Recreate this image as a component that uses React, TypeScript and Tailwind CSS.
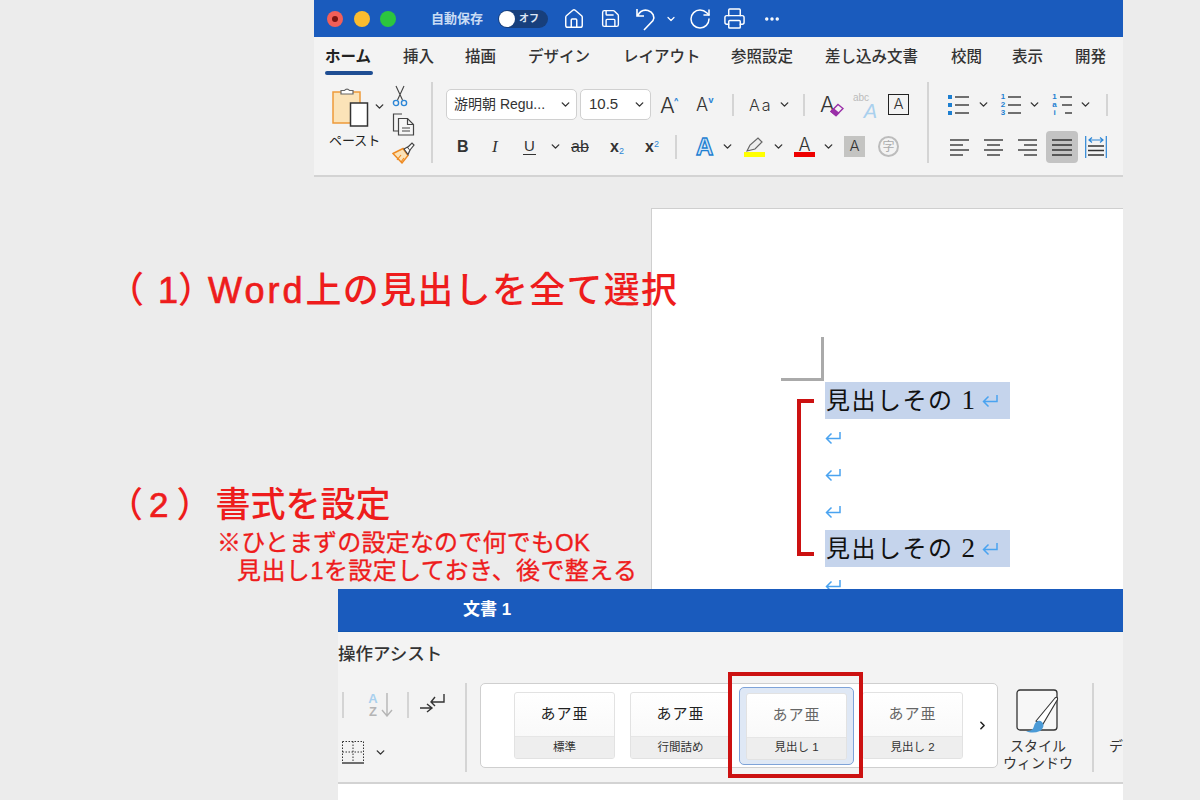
import { ChevronDown, ChevronRight, House, Save, RotateCw, Printer, Ellipsis } from "lucide-react"

const sans = "font-['Liberation_Sans','Noto_Sans_CJK_JP',sans-serif]"

function Chev({ className = "" }: { className?: string }) {
  return <ChevronDown size={13} strokeWidth={2.6} className={`shrink-0 text-[#333] ${className}`} />
}

function Sep({ className = "" }: { className?: string }) {
  return <div className={`w-[2px] shrink-0 bg-[#d4d4d4] ${className}`} />
}

function ReturnMark({ className = "" }: { className?: string }) {
  return (
    <svg width="16" height="14" viewBox="0 0 16 14" fill="none" stroke="#4aa3f0" strokeWidth="1.5" className={className}>
      <path d="M15 1v6.500H1.500M6.500 2.500 1.500 7.500l5 5" />
    </svg>
  )
}

function ClipboardIcon() {
  return (
    <svg width="38" height="42" viewBox="0 0 38 42" fill="none">
      <rect x="1" y="6" width="27" height="31" fill="#fbe3b8" stroke="#ee9a3a" strokeWidth="1.5" />
      <path d="M9 8V4.500h3.500a3 3 0 0 1 5 0H21V8Z" fill="#fff" stroke="#666" strokeWidth="1.2" />
      <rect x="18.500" y="17" width="17" height="23" fill="#fff" stroke="#333" strokeWidth="1.5" />
    </svg>
  )
}

function ScissorsIcon() {
  return (
    <svg width="16" height="22" viewBox="0 0 16 22" fill="none">
      <path d="M4 1 10.500 15M12 1 5.500 15" stroke="#444" strokeWidth="1.1" />
      <circle cx="4" cy="18" r="2.600" stroke="#2c86d6" strokeWidth="1.4" />
      <circle cx="12" cy="18" r="2.600" stroke="#2c86d6" strokeWidth="1.4" />
    </svg>
  )
}

function CopyIcon() {
  return (
    <svg width="23" height="23" viewBox="0 0 23 23" fill="none" stroke="#444" strokeWidth="1.2">
      <path d="M10 1H1.500v17H6" />
      <path d="M6.500 5.500h9l6 6v10.500h-15Z" fill="#f5f5f5" />
      <path d="M15.500 5.500v6h6M10 15h8M10 18h8" />
    </svg>
  )
}

function BrushIcon() {
  return (
    <svg width="23" height="22" viewBox="0 0 23 22" fill="none">
      <path d="M1 11.500 11 6.500l5 7L10 21Z" fill="#fbe3b8" stroke="#ee8a22" strokeWidth="1.4" />
      <path d="M5 18l4-5M9 20l3-4" stroke="#ee8a22" strokeWidth="1.2" />
      <path d="m12 7 3.500-2 2.500 3-2 4.500Z" fill="#fff" stroke="#444" strokeWidth="1.2" />
      <path d="m16 5 4-4 2 2-4 5" fill="#fff" stroke="#444" strokeWidth="1.2" />
    </svg>
  )
}

function Eraser() {
  return (
    <svg width="14" height="14" viewBox="0 0 14 14" fill="none" stroke="#9a2fa8" strokeWidth="1.4" className="absolute -right-[4px] bottom-0">
      <path d="m1 8.500 7-7 5 4-7 7Z" fill="#f3f3f3" />
      <path d="m1 8.500 5 4 2.500-2.500-5-4Z" fill="#9a2fa8" />
    </svg>
  )
}

function BulletList() {
  return (
    <svg width="22" height="22" viewBox="0 0 22 22" fill="none" className="shrink-0">
      <path d="M0 1h4v4H0ZM0 9h4v4H0ZM0 17h4v4H0Z" fill="#1d7fd1" />
      <path d="M7 3h14M7 11h14M7 19h14" stroke="#444" strokeWidth="1.4" />
    </svg>
  )
}

function NumberList() {
  return (
    <div className="flex w-[21px] shrink-0 items-center gap-[2px]">
      <div className="flex w-[6px] flex-col text-center text-[8px] font-bold leading-[8px] text-[#1d7fd1]">
        <span>1</span>
        <span>2</span>
        <span>3</span>
      </div>
      <svg width="13" height="22" viewBox="0 0 13 22" fill="none" stroke="#444" strokeWidth="1.4">
        <path d="M0 3h13M0 11h13M0 19h13" />
      </svg>
    </div>
  )
}

function MultiList() {
  return (
    <div className="flex w-[21px] shrink-0 items-center gap-[2px]">
      <div className="flex w-[7px] flex-col text-center text-[8px] font-bold leading-[8px] text-[#1d7fd1]">
        <span>1</span>
        <span>a</span>
        <span>i</span>
      </div>
      <svg width="12" height="22" viewBox="0 0 12 22" fill="none" stroke="#444" strokeWidth="1.4">
        <path d="M0 3h12M2 11h10M5 19h7" />
      </svg>
    </div>
  )
}

function Align({ kind }: { kind: "left" | "center" | "right" }) {
  const d = {
    left: "M0 1h19M0 6h13M0 11h19M0 16h13",
    center: "M0 1h19M3 6h13M0 11h19M3 16h13",
    right: "M0 1h19M6 6h13M0 11h19M6 16h13",
  }[kind]
  return (
    <svg width="19" height="17" viewBox="0 0 19 17" fill="none" stroke="#444" strokeWidth="1.3" className="shrink-0">
      <path d={d} />
    </svg>
  )
}

function TopWindow() {
  const tabs = [
    ["ホーム", "w-[47px] font-bold text-[#222]"],
    ["挿入", "ml-[31px] w-[32px]"],
    ["描画", "ml-[30px] w-[32px]"],
    ["デザイン", "ml-[31px] w-[62px]"],
    ["レイアウト", "ml-[33px] w-[77px]"],
    ["参照設定", "ml-[31px] w-[64px]"],
    ["差し込み文書", "ml-[30px] w-[95px]"],
    ["校閲", "ml-[31px] w-[32px]"],
    ["表示", "ml-[29px] w-[32px]"],
    ["開発", "ml-[31px] w-[32px]"],
  ]
  return (
    <div className="absolute left-[314px] top-0 flex h-[177px] w-[809px] flex-col border-b-2 border-[#d3d3d3] bg-[#f3f3f3]">
      {/* title bar */}
      <div className="flex h-[37px] shrink-0 items-center bg-[#1a5bbd] pl-[13px] text-white">
        <span className="h-4 w-4 rounded-full bg-[#f25f58] p-[5px]">
          <span className="block h-[6px] w-[6px] rounded-full bg-[#7a1410]" />
        </span>
        <span className="ml-[11px] h-4 w-4 rounded-full bg-[#fbbc2f]" />
        <span className="ml-[10px] h-4 w-4 rounded-full bg-[#2cc63f]" />
        <span className="ml-[35px] w-[52px] text-[13px] font-bold text-[#c9dcf4]">自動保存</span>
        <div className="ml-[15px] flex h-[18px] w-[50px] items-center rounded-full bg-[#173f7c] pl-[1px]">
          <span className="h-4 w-4 rounded-full bg-white" />
          <span className="ml-[4px] text-[10px] font-bold leading-none text-[#dce6f4]">オフ</span>
        </div>
        <House size={22} strokeWidth={1.6} className="ml-[15px] shrink-0" />
        <Save size={21} strokeWidth={1.6} className="ml-[15px] shrink-0" />
        <svg width="20" height="24" viewBox="0 0 20 24" fill="none" stroke="currentColor" strokeWidth="1.6" className="ml-[15px] shrink-0">
          <path d="M1 2v7h7M1.500 9C4 4 8 2.500 12 3.500c5 1.500 7 6 5 10L8 23" />
        </svg>
        <ChevronDown size={12} strokeWidth={2.4} className="ml-[9px] shrink-0" />
        <RotateCw size={24} strokeWidth={1.5} className="ml-[11px] shrink-0" />
        <Printer size={23} strokeWidth={1.5} className="ml-[11px] shrink-0" />
        <Ellipsis size={18} strokeWidth={2.6} className="ml-[17px] shrink-0" />
      </div>
      {/* tabs */}
      <div className="flex h-[38px] shrink-0 items-center pl-[11px] pt-[2px] text-[15.500px] font-medium whitespace-nowrap text-[#333]">
        {tabs.map(([t, c]) => (
          <span key={t} className={`relative shrink-0 ${c}`}>
            {t}
            {t === "ホーム" && <span className="absolute -bottom-[6px] left-0 h-[4px] w-[48px] rounded-full bg-[#1f4e93]" />}
          </span>
        ))}
      </div>
      {/* ribbon */}
      <div className="flex flex-1 pl-[15px] pt-[7px]">
        <div className="flex w-[62px] shrink-0 flex-col">
          <div className="flex items-center pl-[3px] pt-[4px]">
            <ClipboardIcon />
            <Chev className="ml-[3px] mt-[-2px]" />
          </div>
          <span className="mt-[5px] text-[13px] leading-4 whitespace-nowrap text-[#222]">ペースト</span>
        </div>
        <div className="flex w-[40px] shrink-0 flex-col items-start gap-[6px] pl-[1px] pt-[3px]">
          <ScissorsIcon />
          <CopyIcon />
          <BrushIcon />
        </div>
        <Sep className="h-[81px]" />
        <div className="ml-[13px] flex w-[481px] shrink-0 flex-col pt-[4px]">
          <div className="flex h-[34px] items-center pt-[3px] text-[#333]">
            <div className="flex h-[31px] w-[131px] shrink-0 items-center justify-between rounded-[5px] border border-[#d0d0d0] bg-white pl-[7px] pr-[4px] text-[14px] whitespace-nowrap">
              游明朝 Regu...
              <Chev />
            </div>
            <div className="ml-[3px] flex h-[31px] w-[71px] shrink-0 items-center justify-between rounded-[5px] border border-[#d0d0d0] bg-white pl-[8px] pr-[4px] text-[15px]">
              10.5
              <Chev />
            </div>
            <span className="ml-[9px] w-[22px] shrink-0 font-['Inter'] text-[22px] font-light leading-none">
              A<span className="relative -top-[8px] -ml-[1px] text-[10px] font-bold text-[#2c86d6]">^</span>
            </span>
            <span className="ml-[14px] w-[22px] shrink-0 font-['Inter'] text-[18px] font-light leading-none">
              A<span className="relative -top-[8px] text-[9px] font-bold text-[#2c86d6]">v</span>
            </span>
            <Sep className="ml-[14px] h-[22px]" />
            <span className="ml-[15px] w-[24px] shrink-0 font-['Inter'] text-[16px] font-light tracking-[2px]">Aa</span>
            <Chev className="ml-[5px]" />
            <Sep className="ml-[12px] h-[22px]" />
            <span className="relative ml-[15px] h-[24px] w-[20px] shrink-0 font-['Inter'] text-[22px] font-light leading-[22px]">
              A
              <Eraser />
            </span>
            <span className="relative ml-[13px] h-[24px] w-[24px] shrink-0 text-[10px] leading-none text-[#bbb]">
              abc
              <span className="absolute -bottom-[4px] right-0 text-[20px] italic text-[#a9d0ee]">A</span>
            </span>
            <span className="ml-[11px] flex h-[21px] w-[21px] shrink-0 items-center justify-center border border-[#222] font-['Inter'] text-[15px] font-light">A</span>
          </div>
          <div className="mt-[10px] flex h-[32px] items-center pt-[1px] text-[#333]">
            <span className="ml-[11px] w-[11px] shrink-0 text-[16px] font-bold">B</span>
            <span className="ml-[24px] w-[8px] shrink-0 font-['Liberation_Serif'] text-[17px] italic">I</span>
            <span className="ml-[23px] w-[13px] shrink-0 border-b border-[#333] text-center text-[15px] leading-[16px]">U</span>
            <Chev className="ml-[13px]" />
            <span className="ml-[7px] w-[22px] shrink-0 text-center text-[16px] leading-none line-through">ab</span>
            <span className="ml-[19px] w-[17px] shrink-0 text-[16px] font-bold leading-none">
              x<sub className="text-[9px] font-normal text-[#2c86d6]">2</sub>
            </span>
            <span className="ml-[18px] w-[17px] shrink-0 text-[16px] font-bold leading-none">
              x<sup className="text-[9px] font-normal text-[#2c86d6]">2</sup>
            </span>
            <Sep className="ml-[13px] h-[24px]" />
            <span className="ml-[19px] w-[20px] shrink-0 text-[24px] font-bold leading-none text-[#cfe6f8] [-webkit-text-stroke:1.3px_#1d7fd1]">A</span>
            <Chev className="ml-[5px]" />
            <div className="ml-[10px] flex w-[21px] shrink-0 flex-col items-center">
              <svg width="18" height="15" viewBox="0 0 18 15" fill="none" stroke="#666" strokeWidth="1.2">
                <path d="M1 14 4 8l8-7 4 4-7 7Z" fill="#eee" />
              </svg>
              <span className="h-[5px] w-[21px] bg-[#ffff00]" />
            </div>
            <Chev className="ml-[7px]" />
            <div className="ml-[9px] flex w-[21px] shrink-0 flex-col items-center font-['Inter'] text-[18px] font-light leading-[15px]">
              A
              <span className="h-[5px] w-[21px] bg-[#ee0000]" />
            </div>
            <Chev className="ml-[7px]" />
            <span className="ml-[9px] flex h-[21px] w-[21px] shrink-0 items-center justify-center bg-[#c4c4c2] font-['Inter'] text-[15px] font-light">A</span>
            <span className="ml-[13px] flex h-[21px] w-[21px] shrink-0 items-center justify-center rounded-full border-2 border-[#bcbcbc] text-[12px] leading-none text-[#aaa]">字</span>
          </div>
        </div>
        <Sep className="h-[81px]" />
        <div className="ml-[19px] flex shrink-0 flex-col pt-[4px]">
          <div className="flex h-[34px] items-center pt-[3px]">
            <BulletList />
            <Chev className="ml-[7px]" />
            <div className="ml-[10px]">
              <NumberList />
            </div>
            <Chev className="ml-[7px]" />
            <div className="ml-[10px]">
              <MultiList />
            </div>
            <Chev className="ml-[7px]" />
            <Sep className="ml-[14px] h-[22px]" />
          </div>
          <div className="mt-[11px] flex h-[32px] items-center">
            <div className="ml-[2px]">
              <Align kind="left" />
            </div>
            <div className="ml-[15px]">
              <Align kind="center" />
            </div>
            <div className="ml-[15px]">
              <Align kind="right" />
            </div>
            <div className="ml-[9px] flex h-[32px] w-[32px] shrink-0 items-center justify-center rounded-[4px] bg-[#c3c3c3]">
              <svg width="20" height="17" viewBox="0 0 20 17" fill="none" stroke="#333" strokeWidth="1.3">
                <path d="M0 1h20M0 6h20M0 11h20M0 16h20" />
              </svg>
            </div>
            <svg width="22" height="22" viewBox="0 0 22 22" fill="none" className="ml-[7px] shrink-0">
              <path d="M.7 0v22M21.300 0v22M4 4h14M7 1.500 4 4l3 2.500M15 1.500 18 4l-3 2.500" stroke="#2c86d6" strokeWidth="1.2" />
              <path d="M3 10h16M3 14.500h16M3 19h16" stroke="#333" strokeWidth="1.3" />
            </svg>
          </div>
        </div>
      </div>
    </div>
  )
}

function Doc() {
  const blank = "flex h-[37px] items-center"
  return (
    <div className="absolute left-[651px] top-[208px] h-[390px] w-[472px] border-l border-t border-[#cfcfcf] bg-white">
      <div className="absolute left-[129px] top-[128px] h-[44px] w-[43px] border-b-[3px] border-r-[3px] border-[#aaa]" />
      <div className="absolute left-[145px] top-[190px] h-[157px] w-[17px] border-y-4 border-l-4 border-[#cc1111]" />
      <div className="ml-[173px] flex w-[185px] flex-col pt-[173px] font-['Liberation_Serif','Noto_Sans_CJK_JP',serif] text-[24px] text-[#111]">
        <div className={`${blank} bg-[#c5d4ec] pl-[1px] tracking-[1.500px]`}>
          見出しその<span className="ml-[8px] text-[27px] leading-none">1</span>
          <ReturnMark className="ml-[5px]" />
        </div>
        <div className={blank}><ReturnMark /></div>
        <div className={blank}><ReturnMark /></div>
        <div className={blank}><ReturnMark /></div>
        <div className={`${blank} bg-[#c5d4ec] pl-[1px] tracking-[1.500px]`}>
          見出しその<span className="ml-[8px] text-[27px] leading-none">2</span>
          <ReturnMark className="ml-[5px]" />
        </div>
        <div className={blank}><ReturnMark /></div>
      </div>
    </div>
  )
}

function StyleCard({ label, muted = false }: { label: string; muted?: boolean }) {
  return (
    <div className="flex h-[67px] w-[101px] shrink-0 flex-col overflow-hidden rounded-[3px] border border-[#e2e2e2] bg-gradient-to-b from-white to-[#f6f6f6]">
      <div className={`flex flex-1 items-center justify-center font-['Liberation_Serif','Noto_Sans_CJK_JP',serif] text-[15px] tracking-[1px] ${muted ? "text-[#666]" : "text-[#222]"}`}>
        あア亜
      </div>
      <div className="flex h-[22px] items-center justify-center border-t border-[#e6e6e6] bg-[#eeeeee] text-[11.500px] text-[#333]">{label}</div>
    </div>
  )
}

function BottomWindow() {
  return (
    <div className="absolute left-[338px] top-[589px] flex h-[211px] w-[785px] flex-col bg-white">
      <div className="flex h-[43px] shrink-0 items-center border-b border-[#1256b0] bg-[#1a5bbd] pl-[125px] text-[17px] font-bold text-white">文書 1</div>
      <div className="flex h-[152px] shrink-0 flex-col border-b-2 border-[#d3d3d3] bg-[#f3f3f3]">
        <div className="h-[42px] shrink-0 pt-[10px] text-[17.500px] font-medium leading-6 text-[#333]">操作アシスト</div>
        <div className="flex">
          <div className="flex w-[127px] shrink-0 flex-col pl-[4px] pt-[16px]">
            <div className="flex h-[30px] items-center">
              <Sep className="h-[26px]" />
              <div className="ml-[17px] flex w-[24px] shrink-0 flex-col text-center text-[13px] font-bold leading-[13px]">
                <span className="text-[#a9d0ee]">A</span>
                <span className="text-[#b5b5b5]">Z</span>
              </div>
              <svg width="12" height="24" viewBox="0 0 12 24" fill="none" stroke="#b5b5b5" strokeWidth="1.4" className="-ml-[4px] shrink-0">
                <path d="M6 0v23M1 17l5 6 5-6" />
              </svg>
              <Sep className="ml-[14px] h-[26px]" />
              <svg width="26" height="24" viewBox="0 0 26 24" fill="none" stroke="#333" strokeWidth="1.4" className="ml-[10px] shrink-0">
                <path d="M25 1v8H12M16 4l-4 5 4 4M1 15h11M8 11l5 4-5 4" />
              </svg>
            </div>
            <div className="mt-[20px] flex h-[24px] items-center">
              <svg width="22" height="23" viewBox="0 0 22 23" fill="none" stroke="#333" className="shrink-0">
                <path d="M.5.500h21v21M.5.500v21M11 .5v21M.5 11h21" strokeWidth="1" strokeDasharray="1.500 1.500" />
                <path d="M0 22h22" strokeWidth="1.4" />
              </svg>
              <Chev className="ml-[10px]" />
            </div>
          </div>
          <div className="mt-[8px] flex h-[91px] shrink-0 items-center">
            <Sep className="h-[89px]" />
          </div>
          <div className="ml-[13px] mt-[9px] flex h-[85px] w-[518px] shrink-0 items-center rounded-[5px] border border-[#cfcfcf] bg-white pl-[33px]">
            <StyleCard label="標準" />
            <div className="ml-[15px]">
              <StyleCard label="行間詰め" />
            </div>
            <div className="ml-[8px] rounded-[5px] border border-[#7ea3d8] bg-[#dfe8f5] px-[6px] pb-[4px] pt-[5px]">
              <StyleCard label="見出し 1" muted />
            </div>
            <div className="ml-[8px]">
              <StyleCard label="見出し 2" muted />
            </div>
            <ChevronRight size={13} strokeWidth={2.8} className="ml-[13px] shrink-0 text-[#222]" />
          </div>
          <div className="ml-[5px] flex w-[70px] shrink-0 flex-col items-center pt-[15px]">
            <svg width="44" height="46" viewBox="0 0 44 46" fill="none">
              <rect x="1" y="1" width="40" height="40" rx="3" fill="#f7f7f7" stroke="#333" strokeWidth="1.3" />
              <path d="M20 32 39 9c1.500-1.500 3-.5 2.500 1.500L27 35Z" fill="#fff" stroke="#333" strokeWidth="1.1" />
              <path d="M10 42c5 0 7-1 8-5 1-4 5-7 8-4 3 3 1 7-2 9-5 2-10 2-14 0Z" fill="#4a9ad6" />
            </svg>
            <div className="mt-[3px] text-center text-[14px] leading-[17px] whitespace-nowrap text-[#333]">
              スタイル
              <br />
              ウィンドウ
            </div>
          </div>
          <div className="ml-[19px] mt-[8px] flex h-[91px] shrink-0 items-center">
            <Sep className="h-[89px]" />
          </div>
          <div className="ml-[15px] pt-[64px] text-[14px] leading-[17px] whitespace-nowrap text-[#333]">デ</div>
        </div>
      </div>
    </div>
  )
}

export default function App() {
  return (
    <div className={`relative h-[800px] w-[1200px] overflow-hidden bg-[#ececec] ${sans}`}>
      <TopWindow />
      <Doc />
      <BottomWindow />
      <div className="absolute left-[728px] top-[672px] h-[106px] w-[135px] border-4 border-[#cc1111]" />
      <div className="absolute left-[108px] top-[267px] flex text-[36px] font-medium leading-[48px] whitespace-nowrap text-[#ee1c1c]">
        <span>（</span>
        <span className="ml-[14px] [-webkit-text-stroke:0.7px_#ee1c1c]">1</span>
        <span className="tracking-[-6px]">）</span>
        <span className="tracking-[3px] [-webkit-text-stroke:0.7px_#ee1c1c]">Word</span>
        <span className="tracking-[1.300px]">上の見出しを全て選択</span>
      </div>
      <div className="absolute left-[108px] top-[481px] flex text-[35px] font-medium leading-[48px] whitespace-nowrap text-[#ee1c1c]">
        <span>（</span>
        <span className="ml-[6px] [-webkit-text-stroke:0.7px_#ee1c1c]">2</span>
        <span className="ml-[8px]">）</span>
        <span className="ml-[4px]">書式を設定</span>
      </div>
      <div className="absolute left-[217px] top-[529px] text-[24px] leading-[28px] whitespace-nowrap text-[#ee1c1c] [-webkit-text-stroke:0.3px_#ee1c1c]">
        <span className="tracking-[0.200px]">※ひとまずの設定なので何でもOK</span>
        <br />
        <span className="ml-[20px] tracking-[0.400px]">見出し1を設定しておき、後で整える</span>
      </div>
    </div>
  )
}
